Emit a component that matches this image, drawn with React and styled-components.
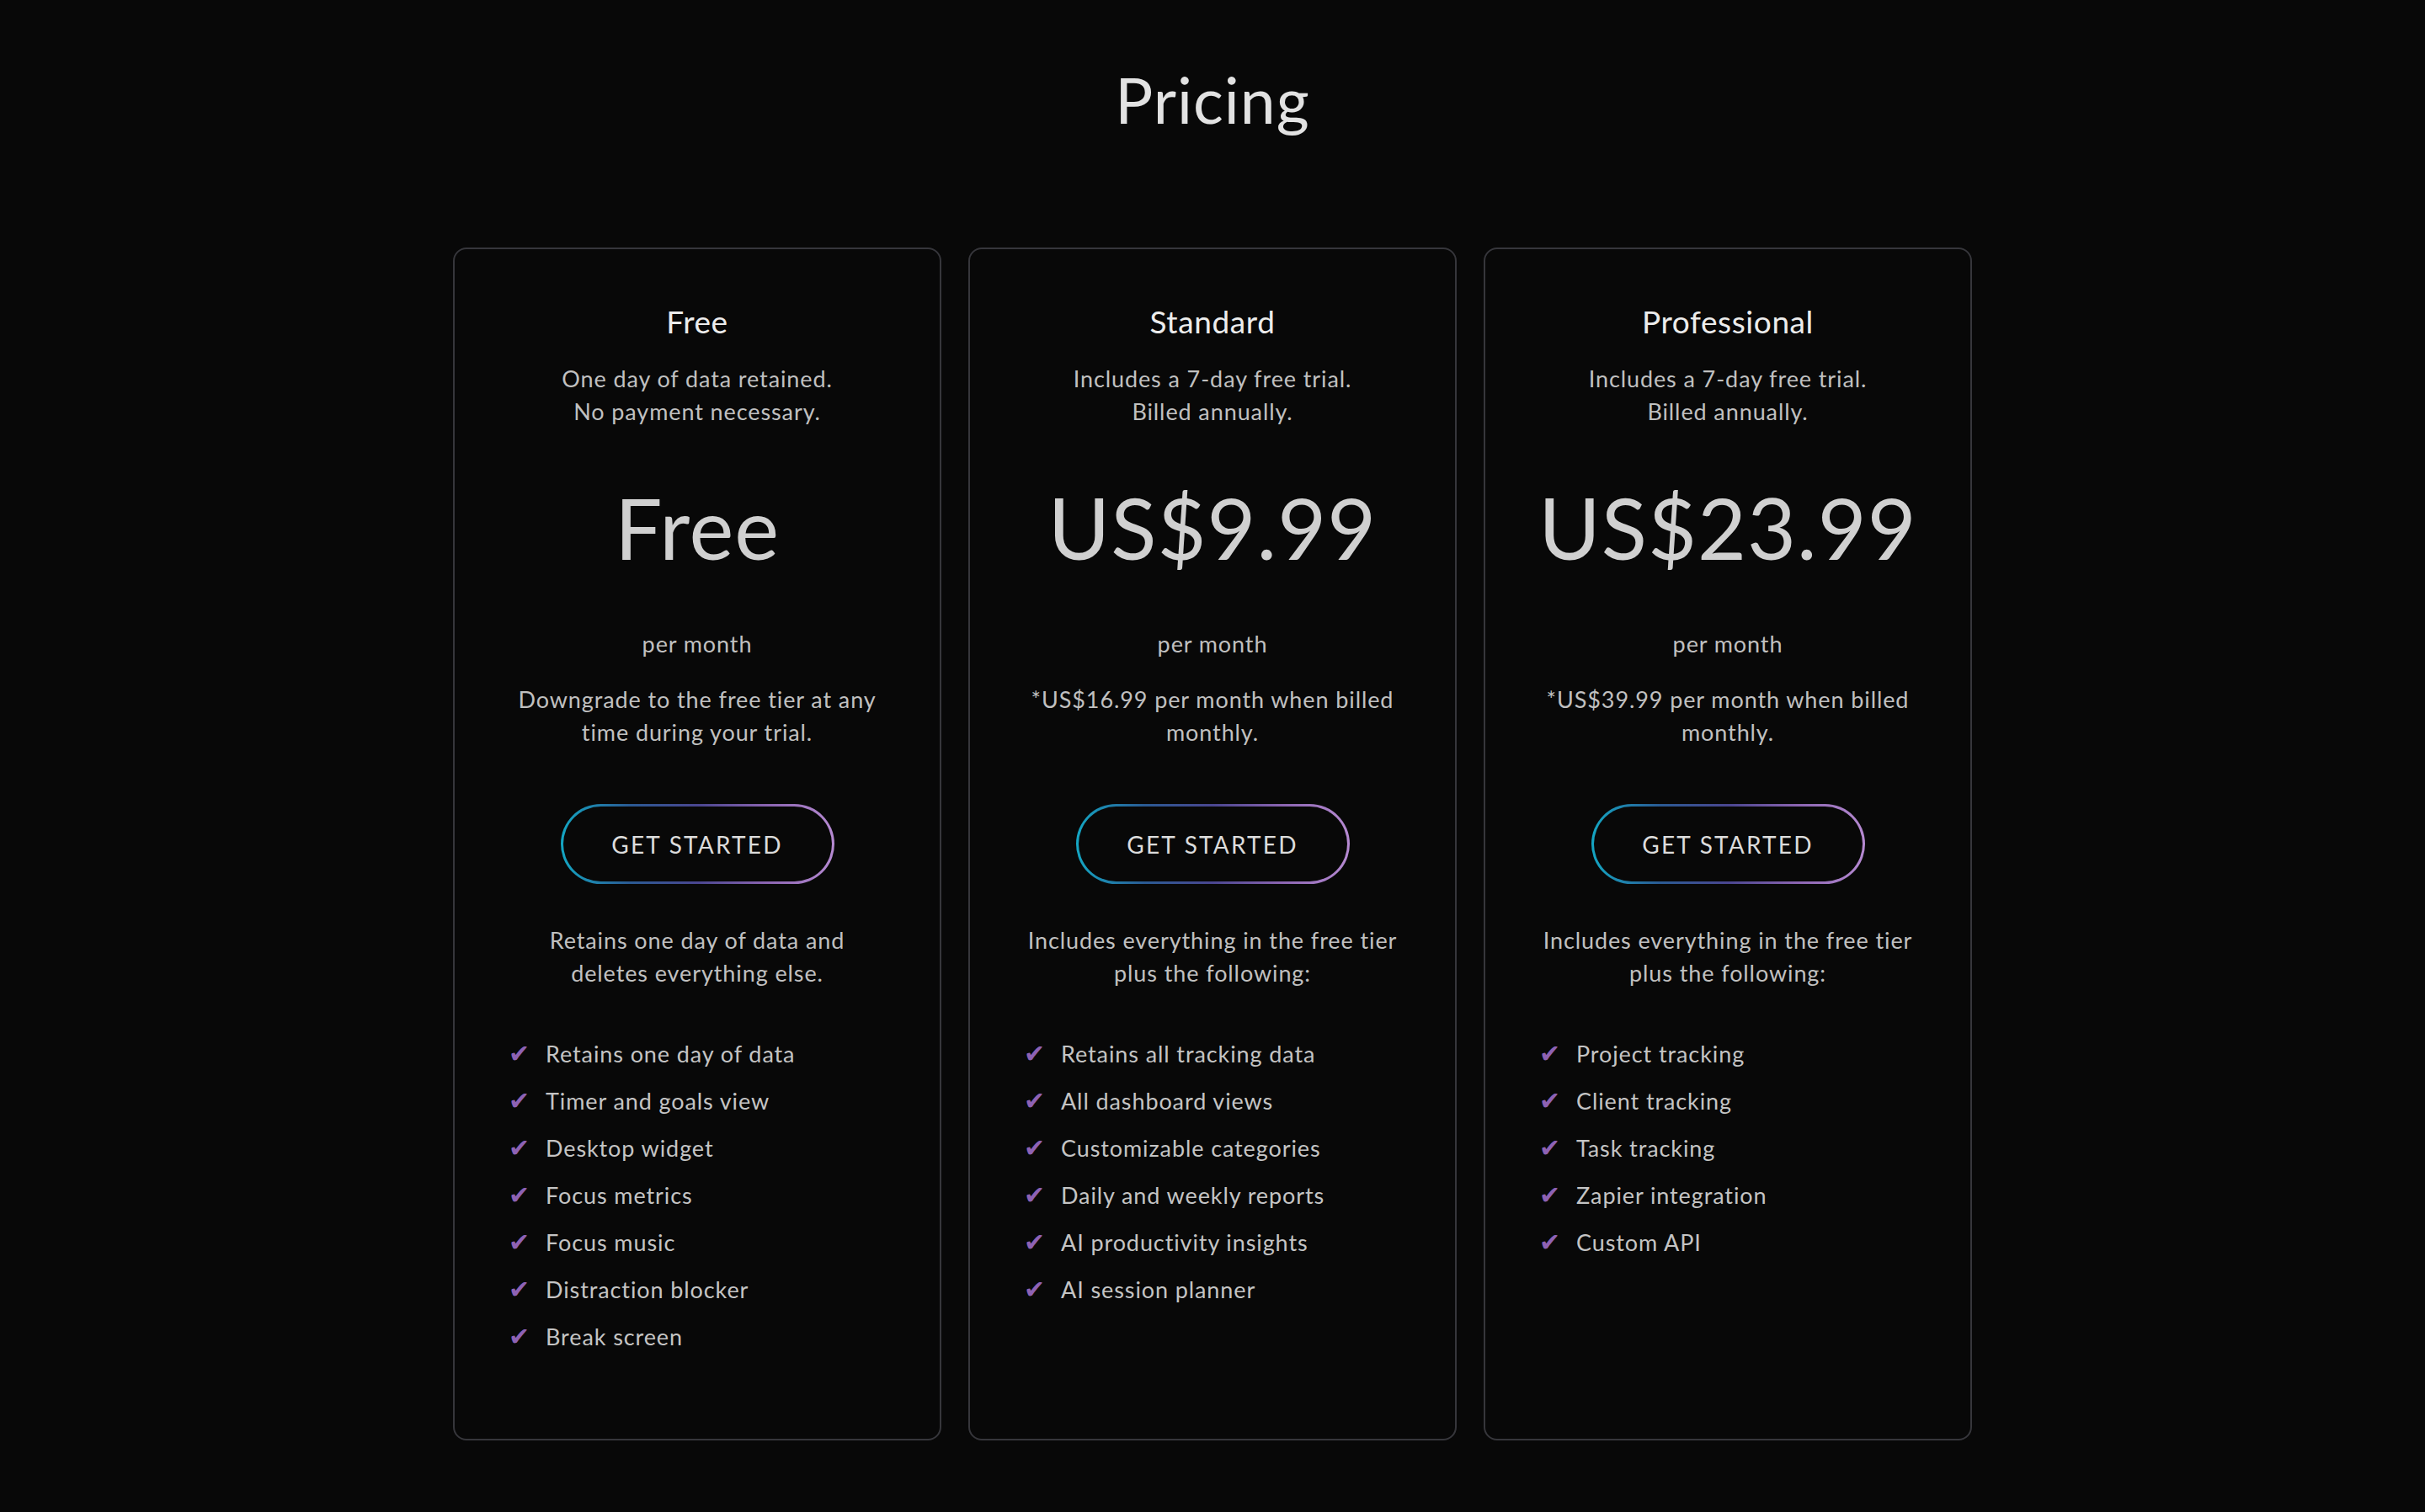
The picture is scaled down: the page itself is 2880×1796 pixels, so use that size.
import React from 'react';
import styled, { createGlobalStyle } from 'styled-components';

const GlobalStyle = createGlobalStyle`
  html, body {
    margin: 0;
    padding: 0;
    background: #080808;
  }
  body {
    font-family: Lato, "Open Sans", sans-serif;
    color: #c4c4c4;
    -webkit-font-smoothing: antialiased;
  }
`;

const Page = styled.main`
  min-height: 1796px;
  box-sizing: border-box;
  padding-top: 75px;
  background: #080808;
`;

const Title = styled.h1`
  margin: 0;
  text-align: center;
  font-size: 75px;
  line-height: 86px;
  font-weight: 400;
  letter-spacing: 1px;
  color: #e2e2e2;
`;

const Plans = styled.div`
  display: grid;
  grid-template-columns: repeat(3, 580px);
  gap: 32px;
  justify-content: center;
  margin-top: 133px;
`;

const Card = styled.section`
  display: flex;
  flex-direction: column;
  align-items: center;
  box-sizing: border-box;
  padding: 64px 40px 102px;
  border: 2px solid #36363b;
  border-radius: 16px;
  text-align: center;
`;

const TierName = styled.h2`
  margin: 0;
  font-size: 37px;
  line-height: 44px;
  font-weight: 400;
  letter-spacing: 0.6px;
  color: #ececec;
`;

const Text = styled.p`
  margin: ${(props) => props.$top || 0}px 0 0;
  font-size: 27px;
  line-height: 39px;
  letter-spacing: 0.9px;
  color: #c0c0c0;
`;

const Price = styled.div`
  margin-top: 61px;
  font-size: 100px;
  line-height: 115px;
  letter-spacing: 1px;
  color: #d0d0d0;
`;

const Button = styled.button`
  margin-top: 66px;
  width: 325px;
  height: 95px;
  box-sizing: border-box;
  border: 3px solid transparent;
  border-radius: 999px;
  background:
    linear-gradient(#080808, #080808) padding-box,
    linear-gradient(90deg, #14a6c3 0%, #2a5a93 25%, #4a4690 50%, #8a64b0 75%, #b68ad2 100%) border-box;
  color: #dcdcdc;
  font-family: Lato, "Open Sans", sans-serif;
  font-size: 28px;
  letter-spacing: 2.2px;
  cursor: pointer;
`;

const Features = styled.ul`
  align-self: stretch;
  display: flex;
  flex-direction: column;
  gap: 17px;
  margin: 57px 0 0;
  padding: 0 0 0 24px;
  list-style: none;
  text-align: left;
`;

const Feature = styled.li`
  display: flex;
  align-items: center;
  gap: 18px;
  font-size: 27px;
  line-height: 39px;
  letter-spacing: 0.9px;
  color: #c4c4c4;
`;

const Check = styled.span`
  width: 26px;
  font-family: "DejaVu Sans", sans-serif;
  font-size: 30px;
  line-height: 39px;
  color: #8e62b4;
`;

const plans = [
  {
    name: 'Free',
    desc: ['One day of data retained.', 'No payment necessary.'],
    price: 'Free',
    note: ['Downgrade to the free tier at any', 'time during your trial.'],
    includes: ['Retains one day of data and', 'deletes everything else.'],
    features: [
      'Retains one day of data',
      'Timer and goals view',
      'Desktop widget',
      'Focus metrics',
      'Focus music',
      'Distraction blocker',
      'Break screen',
    ],
  },
  {
    name: 'Standard',
    desc: ['Includes a 7-day free trial.', 'Billed annually.'],
    price: 'US$9.99',
    note: ['*US$16.99 per month when billed', 'monthly.'],
    includes: ['Includes everything in the free tier', 'plus the following:'],
    features: [
      'Retains all tracking data',
      'All dashboard views',
      'Customizable categories',
      'Daily and weekly reports',
      'AI productivity insights',
      'AI session planner',
    ],
  },
  {
    name: 'Professional',
    desc: ['Includes a 7-day free trial.', 'Billed annually.'],
    price: 'US$23.99',
    note: ['*US$39.99 per month when billed', 'monthly.'],
    includes: ['Includes everything in the free tier', 'plus the following:'],
    features: [
      'Project tracking',
      'Client tracking',
      'Task tracking',
      'Zapier integration',
      'Custom API',
    ],
  },
];

const Lines = ({ lines }) =>
  lines.map((line, i) => (
    <React.Fragment key={i}>
      {i > 0 && <br />}
      {line}
    </React.Fragment>
  ));

const App = () => (
  <>
    <GlobalStyle />
    <Page>
      <Title>Pricing</Title>
      <Plans>
        {plans.map((plan) => (
          <Card key={plan.name}>
            <TierName>{plan.name}</TierName>
            <Text $top={26}>
              <Lines lines={plan.desc} />
            </Text>
            <Price>{plan.price}</Price>
            <Text $top={61}>per month</Text>
            <Text $top={27}>
              <Lines lines={plan.note} />
            </Text>
            <Button>GET STARTED</Button>
            <Text $top={47}>
              <Lines lines={plan.includes} />
            </Text>
            <Features>
              {plan.features.map((feature) => (
                <Feature key={feature}>
                  <Check>✔</Check>
                  {feature}
                </Feature>
              ))}
            </Features>
          </Card>
        ))}
      </Plans>
    </Page>
  </>
);

export default App;
